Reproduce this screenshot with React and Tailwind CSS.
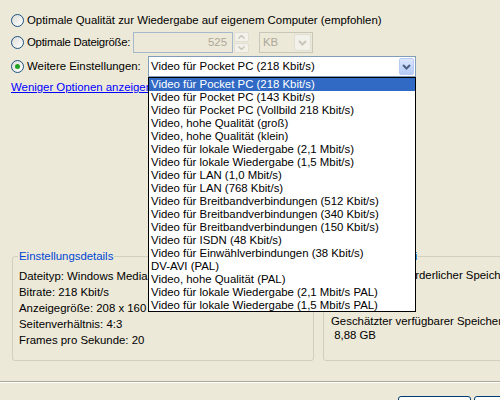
import React from 'react';

const presets = [
  'Video für Pocket PC (218 Kbit/s)',
  'Video für Pocket PC (143 Kbit/s)',
  'Video für Pocket PC (Vollbild 218 Kbit/s)',
  'Video, hohe Qualität (groß)',
  'Video, hohe Qualität (klein)',
  'Video für lokale Wiedergabe (2,1 Mbit/s)',
  'Video für lokale Wiedergabe (1,5 Mbit/s)',
  'Video für LAN (1,0 Mbit/s)',
  'Video für LAN (768 Kbit/s)',
  'Video für Breitbandverbindungen (512 Kbit/s)',
  'Video für Breitbandverbindungen (340 Kbit/s)',
  'Video für Breitbandverbindungen (150 Kbit/s)',
  'Video für ISDN (48 Kbit/s)',
  'Video für Einwählverbindungen (38 Kbit/s)',
  'DV-AVI (PAL)',
  'Video, hohe Qualität (PAL)',
  'Video für lokale Wiedergabe (2,1 Mbit/s PAL)',
  'Video für lokale Wiedergabe (1,5 Mbit/s PAL)',
];

function Radio({ checked }) {
  return (
    <span className="w-[13px] h-[13px] shrink-0 rounded-full border border-[#1C5180] bg-linear-to-br from-[#DCDCD7] to-white flex items-center justify-center">
      {checked && <span className="w-[5px] h-[5px] rounded-full bg-[#21A121]" />}
    </span>
  );
}

function Chevron({ color }) {
  return (
    <svg width="9" height="6" viewBox="0 0 9 6">
      <path d="M1 1 L4.5 4.5 L8 1" fill="none" stroke={color} strokeWidth="2" />
    </svg>
  );
}

function GroupBox({ title, className, children }) {
  return (
    <div className={`relative shrink-0 border border-[#D0D0BF] rounded-[3px] ${className}`}>
      <span className="absolute -top-[7px] left-[5px] px-[1px] bg-[#ECE9D8] text-[#0046D5] leading-[13px] whitespace-nowrap">
        {title}
      </span>
      {children}
    </div>
  );
}

export default function App() {
  return (
    <div className="w-[500px] h-[400px] relative overflow-hidden bg-[#ECE9D8] text-[11.4px] text-black font-['Liberation_Sans',sans-serif]">
      {/* Options */}
      <div className="pl-[11px] pt-[14px] flex flex-col">
        <label className="flex items-center gap-[3px] h-[13px] whitespace-nowrap">
          <Radio />
          <span>Optimale Qualität zur Wiedergabe auf eigenem Computer (empfohlen)</span>
        </label>

        <div className="mt-[5px] h-[21px] flex items-center">
          <label className="w-[122px] flex items-center gap-[3px] whitespace-nowrap">
            <Radio />
            <span className="tracking-[-0.25px]">Optimale Dateigröße:</span>
          </label>
          <div className="w-[100px] h-[21px] border border-[#A5B8CC] bg-[#ECE9D8] text-[#ACA899] flex items-center justify-end pr-[5px]">
            525
          </div>
          <div className="ml-[1px] w-[15px] h-[21px] flex flex-col gap-[1px]">
            <div className="flex-1 rounded-[2px] border border-[#E1DFD4] bg-[#F2F1EA] flex items-center justify-center">
              <svg width="7" height="4" viewBox="0 0 7 4"><path d="M0.5 3.5 L3.5 0.5 L6.5 3.5" fill="none" stroke="#C9C7BA" strokeWidth="1.5" /></svg>
            </div>
            <div className="flex-1 rounded-[2px] border border-[#E1DFD4] bg-[#F2F1EA] flex items-center justify-center">
              <svg width="7" height="4" viewBox="0 0 7 4"><path d="M0.5 0.5 L3.5 3.5 L6.5 0.5" fill="none" stroke="#C9C7BA" strokeWidth="1.5" /></svg>
            </div>
          </div>
          <div className="ml-[10px] w-[54px] h-[21px] border border-[#C9C7BA] bg-[#ECE9D8] flex items-center">
            <span className="flex-1 pl-[3px] text-[#ACA899]">KB</span>
            <div className="w-[17px] h-[17px] mr-[1px] rounded-[2px] border border-[#E1DFD4] bg-[#F2F1EA] flex items-center justify-center">
              <Chevron color="#C9C7BA" />
            </div>
          </div>
        </div>

        <div className="mt-[3px] h-[21px] flex items-center">
          <label className="w-[137px] flex items-center gap-[3px] whitespace-nowrap">
            <Radio checked />
            <span>Weitere Einstellungen:</span>
          </label>
          <div className="w-[268px] h-[21px] border border-[#7F9DB9] bg-white flex items-center">
            <span className="flex-1 pl-[2px] whitespace-nowrap">Video für Pocket PC (218 Kbit/s)</span>
            <div className="w-[15px] h-[17px] mr-[1px] rounded-[2px] border border-[#B9CBF3] bg-linear-to-b from-[#DCE6FD] to-[#B6CBF8] flex items-center justify-center">
              <Chevron color="#4D6185" />
            </div>
          </div>
        </div>

        <a href="#" className="mt-[3px] h-[14px] leading-[14px] w-fit text-[#0000FF] underline whitespace-nowrap">
          Weniger Optionen anzeigen...
        </a>
      </div>

      {/* Details */}
      <div className="mt-[162px] flex">
        <GroupBox title="Einstellungsdetails" className="ml-[12px] w-[302px] h-[105px]">
          <div className="pt-[11px] pl-[6px] leading-[16px] whitespace-nowrap">
            <div>Dateityp: Windows Media Video (WMV)</div>
            <div>Bitrate: 218 Kbit/s</div>
            <div>Anzeigegröße: 208 x 160 Pixel</div>
            <div>Seitenverhältnis: 4:3</div>
            <div>Frames pro Sekunde: 20</div>
          </div>
        </GroupBox>
        <GroupBox title="Info zur Filmdatei" className="ml-[9px] w-[220px] h-[105px]">
          <div className="pt-[11px] pl-[7px] leading-[14px] whitespace-pre">
            <div>Geschätzter erforderlicher Speicherplatz:</div>
            <div> 0,72 MB</div>
            <div className="mt-[18px]">Geschätzter verfügbarer Speicherplatz auf Laufwerk C:</div>
            <div> 8,88 GB</div>
          </div>
        </GroupBox>
      </div>

      {/* Separator + buttons */}
      <div className="mt-[20px] border-t border-[#ACA899] border-b border-b-white" />
      <div className="mt-[13px] flex gap-[3px] pl-[398px]">
        <div className="w-[73px] h-[23px] shrink-0 rounded-[3px] border border-[#003C74] bg-linear-to-b from-white to-[#ECEBE6]" />
        <div className="w-[73px] h-[23px] shrink-0 rounded-[3px] border border-[#003C74] bg-linear-to-b from-white to-[#ECEBE6]" />
      </div>

      {/* Open dropdown list */}
      <ul className="absolute left-[148px] top-[77px] w-[268px] h-[235px] border border-black bg-white">
        {presets.map((p, i) => (
          <li
            key={p}
            className={`h-[13px] leading-[13px] pl-[2px] whitespace-nowrap ${i === 0 ? 'bg-[#316AC5] text-white' : ''}`}
          >
            {p}
          </li>
        ))}
      </ul>
    </div>
  );
}
